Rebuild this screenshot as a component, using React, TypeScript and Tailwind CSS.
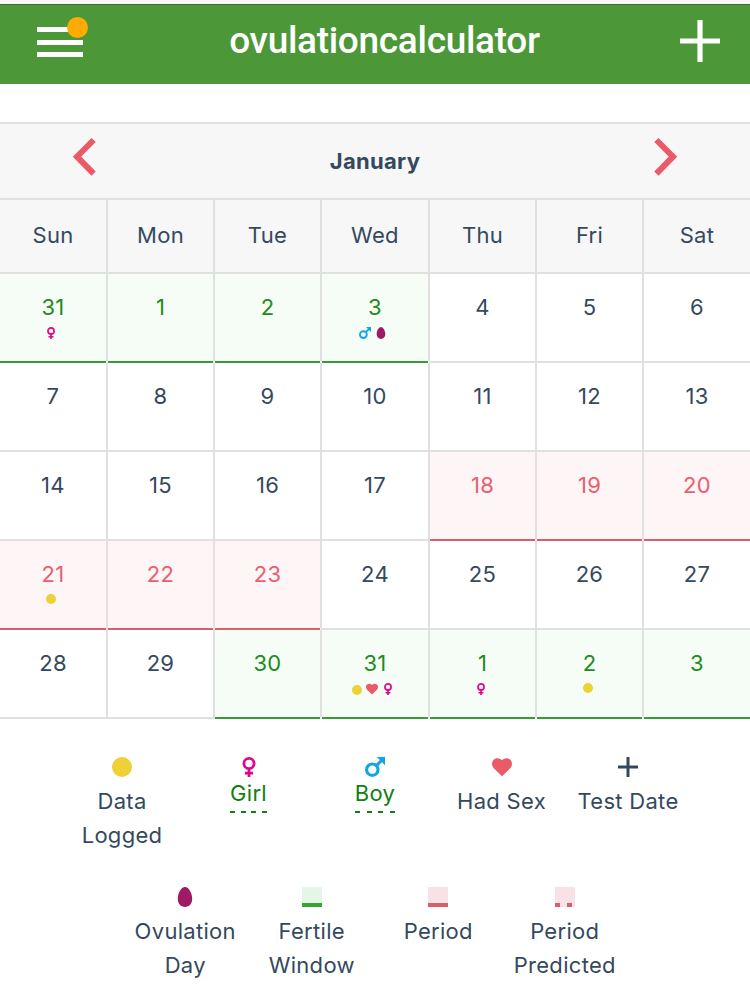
import React from 'react';
import clsx from 'clsx';

type Kind = 'fertile' | 'period' | 'none';
type Mark = 'data' | 'girl' | 'boy' | 'heart' | 'test' | 'egg';

interface Day {
  label: number;
  kind: Kind;
  marks?: Mark[];
}

const WEEKDAYS = ['Sun', 'Mon', 'Tue', 'Wed', 'Thu', 'Fri', 'Sat'];

const day = (label: number, kind: Kind = 'none', marks?: Mark[]): Day => ({ label, kind, marks });

const WEEKS: Day[][] = [
  [
    day(31, 'fertile', ['girl']),
    day(1, 'fertile'),
    day(2, 'fertile'),
    day(3, 'fertile', ['boy', 'egg']),
    day(4),
    day(5),
    day(6),
  ],
  [day(7), day(8), day(9), day(10), day(11), day(12), day(13)],
  [day(14), day(15), day(16), day(17), day(18, 'period'), day(19, 'period'), day(20, 'period')],
  [
    day(21, 'period', ['data']),
    day(22, 'period'),
    day(23, 'period'),
    day(24),
    day(25),
    day(26),
    day(27),
  ],
  [
    day(28),
    day(29),
    day(30, 'fertile'),
    day(31, 'fertile', ['data', 'heart', 'girl']),
    day(1, 'fertile', ['girl']),
    day(2, 'fertile', ['data']),
    day(3, 'fertile'),
  ],
];

const COLUMNS = 'grid grid-cols-[108px_107px_107px_108px_107px_107px_106px]';

function MarkIcon({ mark, className }: { mark: Mark; className?: string }) {
  switch (mark) {
    case 'data':
      return <span className={clsx('block rounded-full bg-[#edd136]', className)} />;
    case 'girl':
      return (
        <svg viewBox="0 0 20 20" className={className} fill="none" stroke="#e0058c" strokeWidth="2.8">
          <circle cx="10" cy="6.5" r="5.100" />
          <path d="M10 11.600v8.400M5.900 16.200h8.200" />
        </svg>
      );
    case 'boy':
      return (
        <svg viewBox="0 0 20 20" className={className} fill="none" stroke="#12a5e4" strokeWidth="3.1">
          <circle cx="7.3" cy="12.7" r="5.700" />
          <path d="M11.4 8.600l5-5" />
          <path d="M11.800 0H20v8.200z" fill="#12a5e4" stroke="none" />
        </svg>
      );
    case 'heart':
      return (
        <svg viewBox="0 0 20 20" className={className} fill="#ea5a67">
          <path d="M10 19.3L1.800 11.200C-.5 8.800-.5 4.800 1.700 2.700 4 .5 7.700.7 10 3.300 12.300.7 16 .5 18.300 2.700c2.200 2.100 2.200 6.100-.1 8.500z" />
        </svg>
      );
    case 'test':
      return (
        <svg viewBox="0 0 20 20" className={className} fill="none" stroke="#34495e" strokeWidth="3">
          <path d="M10 0v20M0 10h20" />
        </svg>
      );
    case 'egg':
      return (
        <svg viewBox="0 0 20 20" className={className} fill="#9e1b64">
          <path d="M10 0c4 0 7.200 6.500 7.200 11.800 0 5-3 8.200-7.200 8.200s-7.200-3.200-7.200-8.200C2.800 6.500 6 0 10 0z" />
        </svg>
      );
  }
}

function DayCell({ item, last }: { item: Day; last: boolean }) {
  return (
    <div className="flex h-[89px]">
      <div
        className={clsx('flex flex-1 flex-col items-center border-b-2 pt-4', {
          'border-[#3a9a35] bg-[#f6fdf6] text-[#228a22]': item.kind === 'fertile',
          'border-[#d8606e] bg-[#fef5f6] text-[#e8606f]': item.kind === 'period',
          'border-[#e0e0e0]': item.kind === 'none',
        })}
      >
        <span className="leading-[34px]">{item.label}</span>
        {item.marks && (
          <div className="mt-[3px] flex items-end">
            {item.marks.map((mark) => (
              <MarkIcon key={mark} mark={mark} className={clsx('mr-1', mark === 'data' ? 'size-2.5' : 'size-3')} />
            ))}
          </div>
        )}
      </div>
      {!last && (
        <div
          className={clsx('w-[2px] border-b-2 bg-[#e0e0e0]', {
            'border-[#edf5ed]': item.kind === 'fertile',
            'border-[#f7e6e8]': item.kind === 'period',
            'border-[#e0e0e0]': item.kind === 'none',
          })}
        />
      )}
    </div>
  );
}

function LegendItem({ icon, children }: { icon: React.ReactNode; children: React.ReactNode }) {
  return (
    <div className="flex h-[130px] w-[126.5px] flex-col items-center text-center">
      {icon}
      <div className="mt-[7px] leading-[34px]">{children}</div>
    </div>
  );
}

function LegendLink({ mark, label, dashes }: { mark: Mark; label: string; dashes: number }) {
  return (
    <div className="flex h-[130px] w-[126.5px] flex-col items-center">
      <MarkIcon mark={mark} className="size-5" />
      <div className="flex flex-col text-[#108010]">
        <span className="-mt-px leading-[34px]">{label}</span>
        <span className="mt-px flex justify-between">
          {Array.from({ length: dashes }, (_, i) => (
            <span key={i} className="h-[2px] w-[5px] bg-[#108010]" />
          ))}
        </span>
      </div>
    </div>
  );
}

export default function App() {
  return (
    <div className="h-[1000px] w-[750px] overflow-hidden bg-white font-['Inter',sans-serif] text-[22px] tracking-[0.3px] text-[#34495e]">
      <div className="h-1 bg-[#f7f7f7]" />
      <header className="flex h-20 items-start justify-between border-t border-[#39702a] bg-[#4c9737] pr-[30px] pl-[37px]">
        <button className="relative mt-[22px] flex w-[46px] flex-col gap-[7.500px]">
          <span className="h-[5px] w-full bg-white" />
          <span className="h-[5px] w-full bg-white" />
          <span className="h-[5px] w-full bg-white" />
          <span className="absolute -top-[10px] left-[30px] size-[21px] rounded-full bg-[#ffaa05]" />
        </button>
        <h1 className="mt-[14px] ml-[6px] font-['Roboto',sans-serif] text-[37px] leading-[44px] font-medium tracking-[-0.3px] text-white">
          ovulationcalculator
        </h1>
        <button className="mt-[15px]">
          <svg width="40" height="42" viewBox="0 0 40 42" stroke="#fff" strokeWidth="5.200">
            <path d="M20 0v42M0 21h40" />
          </svg>
        </button>
      </header>

      <section className="mt-[38px]">
        <div className="flex h-[78px] items-start justify-between border-y-2 border-[#e0e0e0] bg-[#f7f7f7] px-[72px]">
          <svg width="24" height="40" viewBox="0 0 24 40" className="mt-[13px]" fill="none" stroke="#ea5a67" strokeWidth="6">
            <path d="M21.600 3L5 19.700l16.600 16.900" />
          </svg>
          <span className="leading-[74px] font-bold">January</span>
          <svg width="24" height="40" viewBox="0 0 24 40" className="mt-[13px]" fill="none" stroke="#ea5a67" strokeWidth="6">
            <path d="M2.400 3L19 19.700 2.400 36.600" />
          </svg>
        </div>

        <div className={clsx(COLUMNS, 'border-b-2 border-[#e0e0e0] bg-[#f7f7f7]')}>
          {WEEKDAYS.map((name) => (
            <div key={name} className="border-r-2 border-[#e0e0e0] pb-[2px] text-center leading-[70px] last:border-r-0">
              {name}
            </div>
          ))}
        </div>

        {WEEKS.map((week, row) => (
          <div key={row} className={COLUMNS}>
            {week.map((item, col) => (
              <DayCell key={col} item={item} last={col === 6} />
            ))}
          </div>
        ))}
      </section>

      <section className="flex flex-wrap justify-center px-[58px] pt-[38px]">
        <LegendItem icon={<MarkIcon mark="data" className="size-5" />}>
          Data
          <br />
          Logged
        </LegendItem>
        <LegendLink mark="girl" label="Girl" dashes={4} />
        <LegendLink mark="boy" label="Boy" dashes={4} />
        <LegendItem icon={<MarkIcon mark="heart" className="size-5" />}>Had Sex</LegendItem>
        <LegendItem icon={<MarkIcon mark="test" className="size-5" />}>Test Date</LegendItem>
        <LegendItem icon={<MarkIcon mark="egg" className="size-5" />}>
          Ovulation
          <br />
          Day
        </LegendItem>
        <LegendItem icon={<span className="size-5 border-b-4 border-[#35a435] bg-[#e6f6e6]" />}>
          Fertile
          <br />
          Window
        </LegendItem>
        <LegendItem icon={<span className="size-5 border-b-4 border-[#d8606e] bg-[#f9e2e5]" />}>Period</LegendItem>
        <LegendItem
          icon={
            <span className="flex size-5 items-end gap-[7px] bg-[#f9e2e5]">
              <span className="h-1 w-[5px] bg-[#d8606e]" />
              <span className="h-1 w-[5px] bg-[#d8606e]" />
            </span>
          }
        >
          Period
          <br />
          Predicted
        </LegendItem>
      </section>
    </div>
  );
}
